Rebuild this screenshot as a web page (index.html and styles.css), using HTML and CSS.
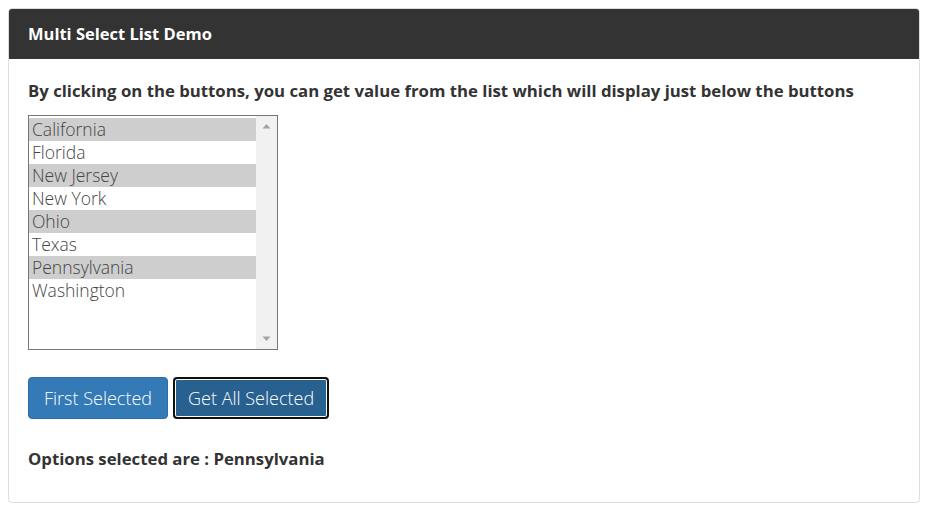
FILE: index.html
```html
<!DOCTYPE html>
<html>
<head>
<meta charset="utf-8">
<link rel="stylesheet" href="styles.css">
</head>
<body>
<div class="panel">
  <div class="panel-heading">Multi Select List Demo</div>
  <div class="panel-body">
    <p class="intro">By clicking on the buttons, you can get value from the list which will display just below the buttons</p>
    <div class="listbox">
      <div class="options">
        <div class="opt sel">California</div>
        <div class="opt">Florida</div>
        <div class="opt sel">New Jersey</div>
        <div class="opt">New York</div>
        <div class="opt sel">Ohio</div>
        <div class="opt">Texas</div>
        <div class="opt sel">Pennsylvania</div>
        <div class="opt">Washington</div>
      </div>
      <div class="scrollbar">
        <svg class="arrow" width="9" height="6" viewBox="0 0 9 6"><polygon points="0.5,5.5 4.5,1 8.5,5.5" fill="#a3a3a3"/></svg>
        <svg class="arrow" width="9" height="6" viewBox="0 0 9 6"><polygon points="0.5,0.5 4.5,5 8.5,0.5" fill="#a3a3a3"/></svg>
      </div>
    </div>
    <div class="buttons">
      <button class="btn">First Selected</button>
      <button class="btn active">Get All Selected</button>
    </div>
    <p class="result">Options selected are : Pennsylvania</p>
  </div>
</div>
</body>
</html>
```

FILE: styles.css
```css
html, body {
  margin: 0;
  padding: 0;
  background: #fff;
}
body {
  padding: 8px 12px 0 8px;
  font-family: "Open Sans", "Noto Sans", sans-serif;
  color: #333;
}
.panel {
  border: 1px solid #dddddd;
  border-radius: 4px;
  height: 495px;
  box-sizing: border-box;
  box-shadow: 0 1px 1px rgba(0,0,0,0.05);
}
.panel-heading {
  background: #333333;
  color: #fff;
  font-weight: 700;
  font-size: 16.5px;
  height: 50px;
  line-height: 50px;
  padding: 0 19px;
  border-radius: 3px 3px 0 0;
}
.panel-body {
  padding: 20px 19px;
}
.intro {
  margin: 0;
  font-size: 16.75px;
  font-weight: 700;
  line-height: 24px;
}
.listbox {
  margin-top: 12px;
  width: 250px;
  height: 235px;
  box-sizing: border-box;
  border: 1px solid #767676;
  display: flex;
}
.options {
  flex: 1;
  padding-top: 2px;
}
.opt {
  height: 23px;
  line-height: 23px;
  padding-left: 3px;
  font-size: 17.5px;
  font-weight: 300;
  color: #444;
}
.opt.sel {
  background: #cecece;
}
.scrollbar {
  width: 21px;
  background: #f1f1f1;
  display: flex;
  flex-direction: column;
  justify-content: space-between;
  align-items: center;
  padding: 7px 0;
}
.arrow {
  display: block;
}
.buttons {
  margin-top: 27px;
  display: flex;
  gap: 5px;
}
.btn {
  font-family: "Open Sans", "Noto Sans", sans-serif;
  font-size: 18px;
  font-weight: 300;
  color: #fff;
  background: #337ab7;
  border: 1px solid #2e6da4;
  border-radius: 4px;
  height: 42px;
  padding: 0 15px;
}
.btn.active {
  background: #286090;
  border: 2px solid #101010;
  box-shadow: 0 0 0 1px #fff inset;
  padding: 0 13px;
}
.result {
  margin: 28px 0 0;
  font-size: 16.75px;
  font-weight: 700;
}
```
